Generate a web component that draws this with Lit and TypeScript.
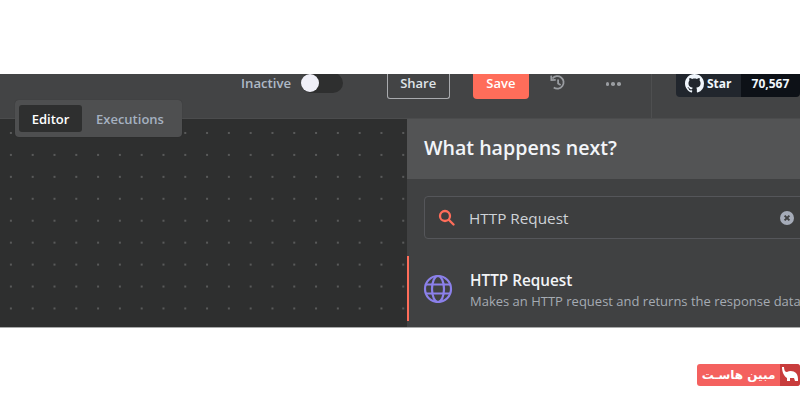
import { LitElement, html, css } from "lit";
import { customElement } from "lit/decorators.js";

@customElement("app-root")
export class AppRoot extends LitElement {
  static styles = css`
    :host { display: block; width: 800px; height: 400px; background: #fff; overflow: hidden; font-family: "Open Sans", sans-serif; }
    .top { height: 74px; }
    .app { height: 254px; box-sizing: border-box; border-bottom: 1px solid #a9aaaa; background: #2e2f2f; position: relative; overflow: hidden; display: flex; flex-direction: column; }
    .header { height: 44px; flex: none; background: #434445; border-bottom: 1px solid #4b4c4d; display: flex; align-items: flex-start; box-sizing: content-box; }
    .inactive { margin-left: 241px; margin-top: 0; font-size: 13.2px; font-weight: 600; line-height: 18px; color: #aeb9c6; }
    .switch { margin-left: 10px; margin-top: -1px; width: 42px; height: 20px; border-radius: 10px; background: #2e2f2f; position: relative; }
    .knob { position: absolute; left: 0; top: 1px; width: 18px; height: 18px; border-radius: 50%; background: #f0f0f8; }
    .share { margin-left: 44px; margin-top: -2px; width: 64px; height: 27px; padding-bottom: 4px; box-sizing: border-box; border: 1px solid #a9abae; border-top: none; border-radius: 0 0 3px 3px; color: #dfe3e8; font-size: 13px; font-weight: 600; display: flex; align-items: center; justify-content: center; }
    .save { margin-left: 23px; margin-top: -2px; width: 57px; height: 27px; padding-bottom: 5px; box-sizing: border-box; border-radius: 0 0 4px 4px; background: #ff6d5a; color: #fff; font-size: 13px; font-weight: 600; display: flex; align-items: center; justify-content: center; }
    .hist { margin-left: 21px; margin-top: 0; display: block; color: #9a9da1; }
    .dots { margin-left: 40px; margin-top: 8px; display: flex; gap: 2px; }
    .dots i { width: 3.6px; height: 3.6px; border-radius: 50%; background: #9a9da1; }
    .div { margin-left: 30px; width: 1px; height: 44px; background: #4e4f50; }
    .gh { margin-left: 24px; margin-top: 0; height: 23px; display: flex; border-radius: 0 0 4px 4px; overflow: hidden; font-size: 12px; font-weight: 700; color: #f0f6fc; }
    .star { width: 66px; padding-bottom: 5px; background: #21262d; display: flex; align-items: center; justify-content: center; gap: 3px; box-sizing: border-box; }
    .star span { font-size: 12px; }
    .count { width: 60px; padding-bottom: 5px; box-sizing: border-box; background: #0d1117; display: flex; align-items: center; justify-content: center; }
    .tabs { position: absolute; left: 15px; top: 26px; width: 167px; height: 37px; box-sizing: border-box; padding: 5px 4px; background: #4e4f50; border-radius: 4px; display: flex; font-size: 13px; font-weight: 600; line-height: 18px; box-shadow: 0 0 1px rgba(0,0,0,.3); }
    .tab { display: flex; align-items: center; justify-content: center; color: #a5b1c0; }
    .tab.on { width: 63px; height: 27px; background: #2e2f2f; border-radius: 3px; color: #fff; }
    .tab.off { margin-left: 14px; }
    .body { flex: 1; display: flex; min-height: 0; }
    .canvas { width: 407px; flex: none; background-color: #2e2f2f; background-image: radial-gradient(circle at center, #5a5b5b 0, #5a5b5b .7px, transparent 1px); background-size: 21.8px 21.95px; background-position: 0px 3px; }
    .panel { flex: 1; min-width: 0; background: #404142; display: flex; flex-direction: column; overflow: hidden; }
    .phead { height: 60px; flex: none; box-sizing: border-box; padding: 0 0 4px 17px; background: #535455; display: flex; align-items: center; font-size: 19.6px; font-weight: 600; color: #f2f5f9; }
    .search { margin: 17px 0 0 17px; width: 390px; height: 43px; flex: none; box-sizing: border-box; border: 1px solid #55565a; border-radius: 4px; background: #3d3e3f; display: flex; align-items: center; font-size: 15.3px; color: #cfd3d8; white-space: nowrap; }
    .search svg.s { margin-left: 13px; flex: none; }
    .search span { margin-left: 14px; }
    .clear { margin-left: 212px; flex: none; }
    .item { margin-top: 17px; height: 65px; flex: none; border-left: 2px solid #ff6d5a; display: flex; align-items: flex-start; white-space: nowrap; }
    .item svg { margin: 18px 0 0 14px; flex: none; }
    .txt { margin-left: 17px; margin-top: 14px; }
    .name { font-size: 15.3px; font-weight: 600; line-height: 20px; color: #f2f4f7; }
    .desc { font-size: 13px; line-height: 22px; color: #a5abb3; }
    .foot { display: flex; justify-content: flex-end; margin-top: 36px; }
    .wm { width: 103px; height: 22px; display: flex; border-radius: 3px; overflow: hidden; background: #f4615f; direction: ltr; }
    .wm .t { flex: 1; display: flex; align-items: center; justify-content: center; color: #fff; font-size: 12px; font-weight: 700; font-family: "DejaVu Sans", "Noto Sans", sans-serif; white-space: nowrap; }
    .wm .i { width: 20px; background: #c83c3c; display: flex; }
  `;

  render() {
    return html`
      <div class="top"></div>
      <div class="app">
        <div class="header">
          <div class="inactive">Inactive</div>
          <div class="switch"><div class="knob"></div></div>
          <div class="share">Share</div>
          <div class="save">Save</div>
          <svg class="hist" width="16" height="18" viewBox="0 0 16 18" fill="none" stroke="currentColor" stroke-width="1.8">
            <path d="M2.5 4.5 A6.3 6.3 0 1 1 3.8 13.5"/>
            <path d="M1.2 1.5 L1.4 6 L5.8 5.8" />
            <path d="M8.2 5.5 V9.5 L10.8 11"/>
          </svg>
          <div class="dots"><i></i><i></i><i></i></div>
          <div class="div"></div>
          <div class="gh">
            <div class="star">
              <svg width="19" height="19" viewBox="0 0 16 16" fill="#f0f6fc"><path d="M8 0C3.58 0 0 3.58 0 8c0 3.54 2.29 6.53 5.47 7.59.4.07.55-.17.55-.38 0-.19-.01-.82-.01-1.49-2.01.37-2.53-.49-2.69-.94-.09-.23-.48-.94-.82-1.13-.28-.15-.68-.52-.01-.53.63-.01 1.08.58 1.23.82.72 1.21 1.87.87 2.33.66.07-.52.28-.87.51-1.07-1.78-.2-3.64-.89-3.64-3.95 0-.87.31-1.59.82-2.15-.08-.2-.36-1.02.08-2.12 0 0 .67-.21 2.2.82.64-.18 1.32-.27 2-.27s1.36.09 2 .27c1.53-1.04 2.2-.82 2.2-.82.44 1.1.16 1.92.08 2.12.51.56.82 1.27.82 2.15 0 3.07-1.87 3.75-3.65 3.95.29.25.54.73.54 1.48 0 1.07-.01 1.93-.01 2.2 0 .21.15.46.55.38A8.01 8.01 0 0 0 16 8c0-4.42-3.58-8-8-8z"/></svg>
              <span>Star</span>
            </div>
            <div class="count">70,567</div>
          </div>
        </div>
        <div class="tabs">
          <div class="tab on">Editor</div>
          <div class="tab off">Executions</div>
        </div>
        <div class="body">
          <div class="canvas"></div>
          <div class="panel">
            <div class="phead">What happens next?</div>
            <div class="search">
              <svg class="s" width="17" height="17" viewBox="0 0 17 17" fill="none" stroke="#ff6d5a" stroke-width="2.3"><circle cx="7" cy="7" r="5"/><path d="M10.8 10.8 L15.5 15.5" stroke-linecap="round"/></svg>
              <span>HTTP Request</span>
              <svg class="clear" width="14" height="14" viewBox="0 0 14 14"><circle cx="7" cy="7" r="7" fill="#a5abb8"/><path d="M4.6 4.6 L9.4 9.4 M9.4 4.6 L4.6 9.4" stroke="#404142" stroke-width="2"/></svg>
            </div>
            <div class="item">
              <svg width="30" height="30" viewBox="0 0 30 30" fill="none" stroke="#8b80ea" stroke-width="2.2">
                <circle cx="15" cy="15" r="13"/>
                <ellipse cx="15" cy="15" rx="6" ry="13"/>
                <path d="M3 10.5 H27 M3 19.5 H27"/>
              </svg>
              <div class="txt">
                <div class="name">HTTP Request</div>
                <div class="desc">Makes an HTTP request and returns the response data</div>
              </div>
            </div>
          </div>
        </div>
      </div>
      <div class="foot">
        <div class="wm">
          <div class="t" dir="rtl">مبین هاسـت</div>
          <div class="i">
            <svg width="20" height="22" viewBox="0 0 20 22" fill="#fff"><path d="M2 3 L4 3 C4 6 5 8 7 8 C10 6 14 7 16 9 C18 11 18 14 18 17 L15 17 L14 14 L10 14 L10 17 L7 17 L7 14 C4 12 2 8 2 3Z"/></svg>
          </div>
        </div>
      </div>
    `;
  }
}
